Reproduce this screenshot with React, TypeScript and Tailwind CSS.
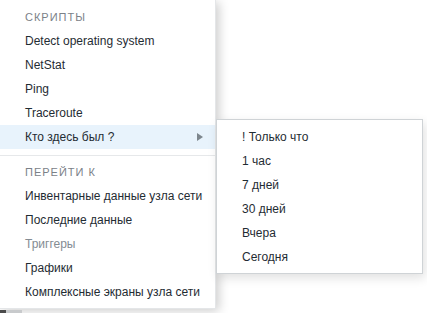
const scripts = ['Detect operating system', 'NetStat', 'Ping', 'Traceroute'];
const goto = [
  { label: 'Инвентарные данные узла сети' },
  { label: 'Последние данные' },
  { label: 'Триггеры', disabled: true },
  { label: 'Графики' },
  { label: 'Комплексные экраны узла сети' },
];
const periods = ['! Только что', '1 час', '7 дней', '30 дней', 'Вчера', 'Сегодня'];

function Header({ children }: { children: string }) {
  return (
    <div className="h-6 flex items-center px-[25px] text-[11px] tracking-[1px] uppercase text-[#7b8188]">
      {children}
    </div>
  );
}

function Item({ label, disabled, active, arrow }: { label: string; disabled?: boolean; active?: boolean; arrow?: boolean }) {
  return (
    <div
      className={
        'h-6 flex items-center justify-between pl-[25px] pr-[10px] text-[12px] ' +
        (disabled ? 'text-[#848c93] ' : 'text-[#1f2c33] ') +
        (active ? 'bg-[#e8f3fc]' : '')
      }
    >
      <span>{label}</span>
      {arrow && (
        <svg width="6" height="8" viewBox="0 0 6 8" className="mr-[2px]">
          <path d="M0 0 L6 4 L0 8 Z" fill="#7d868d" />
        </svg>
      )}
    </div>
  );
}

export default function App() {
  return (
    <div
      className="relative w-[427px] h-[313px] overflow-hidden bg-white"
      style={{ fontFamily: '"Liberation Sans", Arial, sans-serif' }}
    >
      <div className="w-[216px] h-[309px] bg-white pt-[5px] shadow-[3px_2px_10px_rgba(0,0,0,0.2)] border-r border-b border-[#e4e6e8]">
        <Header>Скрипты</Header>
        {scripts.map((s) => (
          <Item key={s} label={s} />
        ))}
        <Item label="Кто здесь был ?" active arrow />
        <div className="mt-[6px] mb-[4px] border-t border-[#e6e8ea]" />
        <Header>Перейти к</Header>
        {goto.map((g) => (
          <Item key={g.label} label={g.label} disabled={g.disabled} />
        ))}
      </div>
      <div className="absolute left-0 bottom-0 w-[6px] h-[3px] bg-[#4a4a4a]" />
      <div className="absolute left-[6px] bottom-0 w-[16px] h-[3px] bg-[#c8cacc]" />

      <div className="absolute left-[216px] top-[119px] w-[207px] h-[155px] bg-white border border-[#cfd3d6] py-[5px] shadow-[2px_4px_10px_rgba(0,0,0,0.12)]">
        {periods.map((p) => (
          <div key={p} className="h-6 flex items-center pl-[25px] text-[12px] text-[#1f2c33]">
            {p}
          </div>
        ))}
      </div>
    </div>
  );
}
